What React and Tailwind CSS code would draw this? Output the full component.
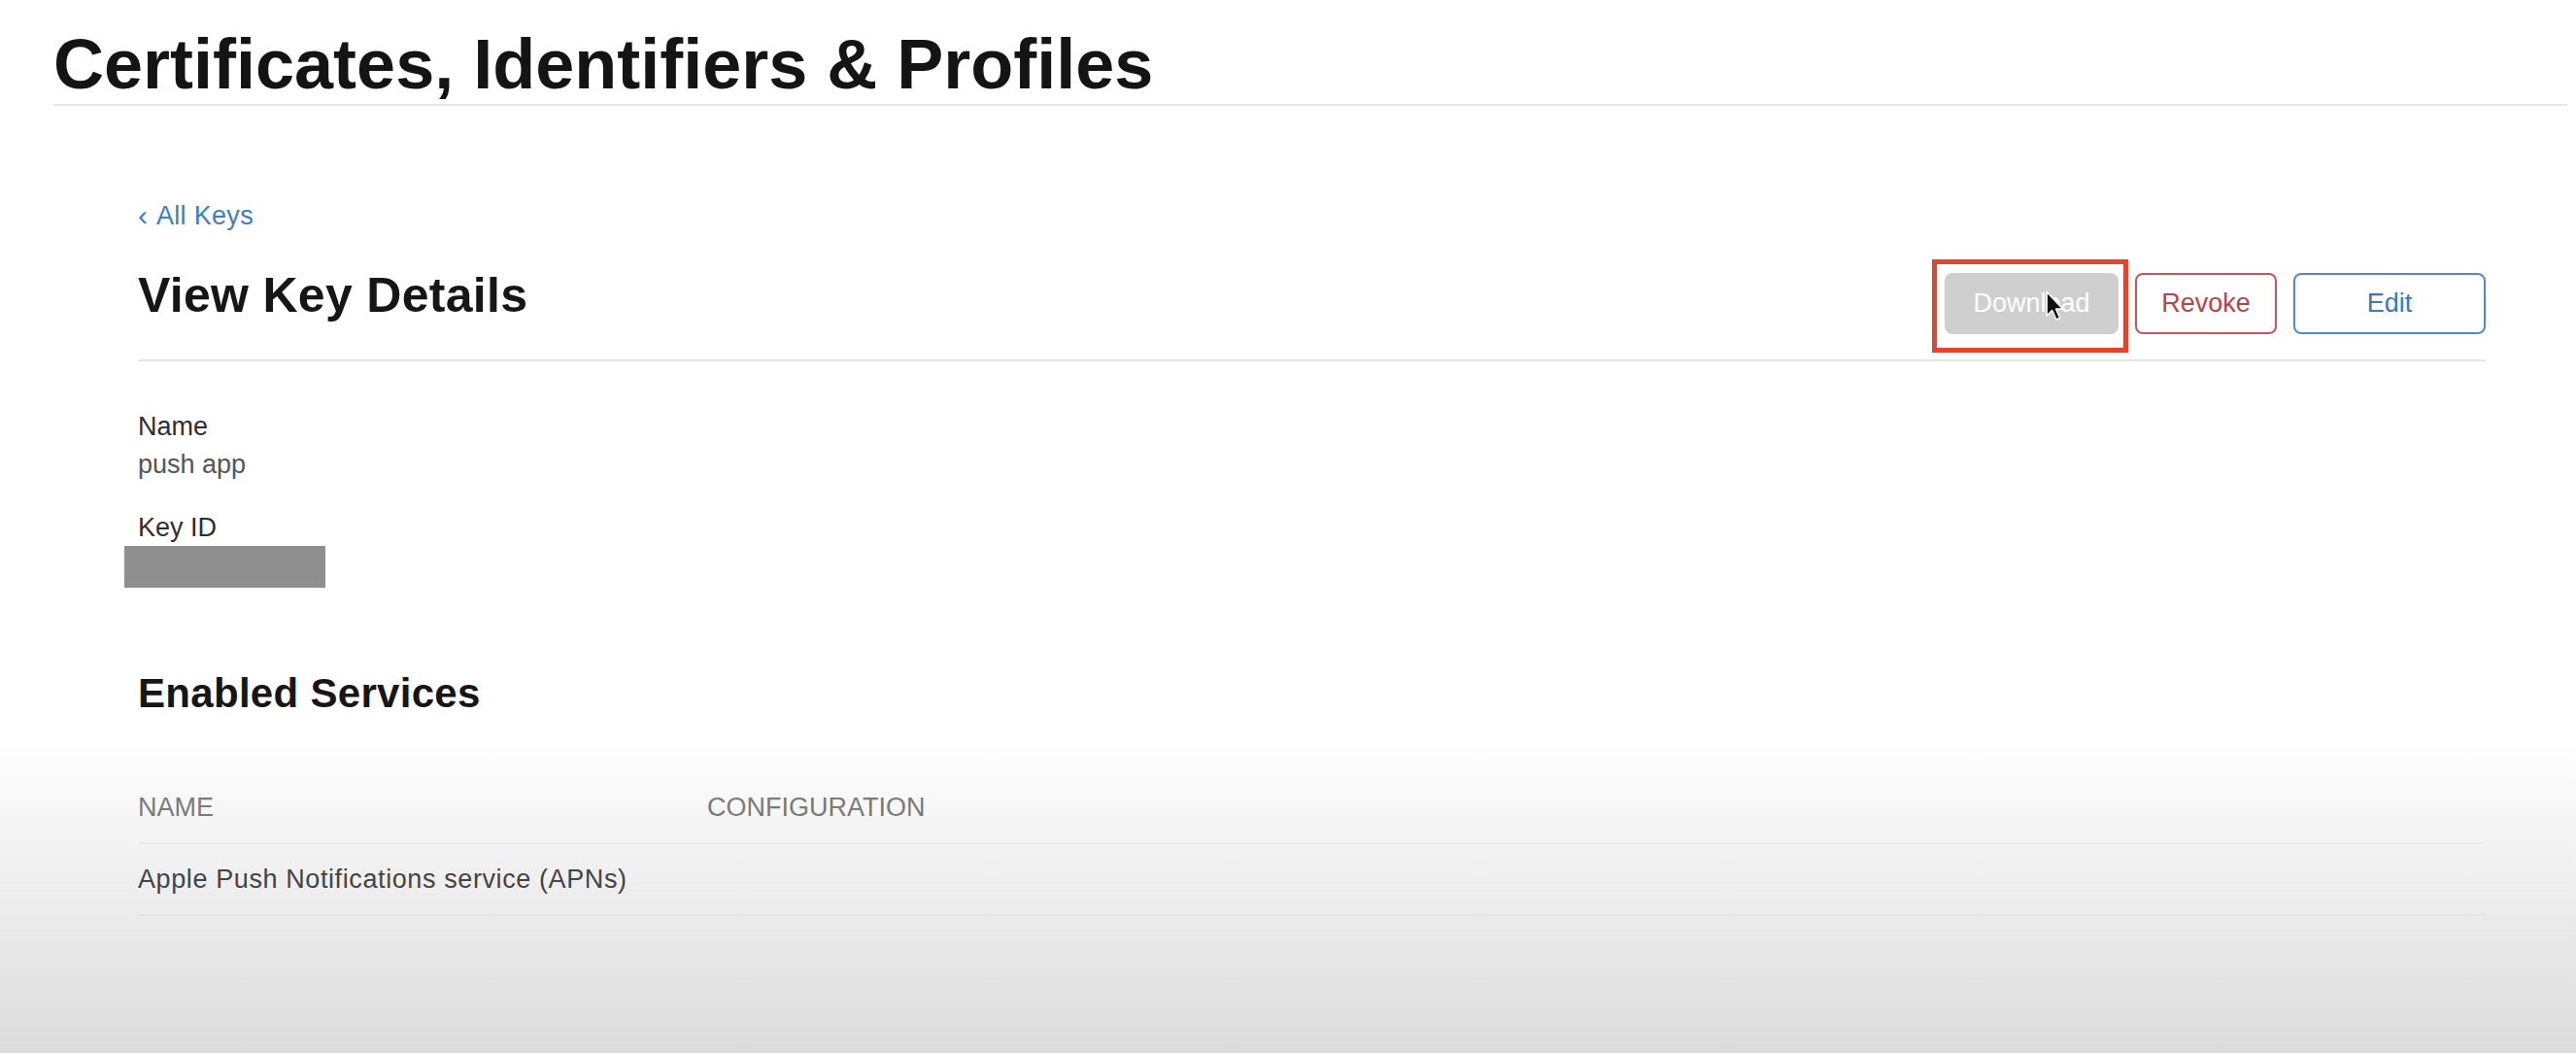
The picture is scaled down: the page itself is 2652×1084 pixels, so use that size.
import React from 'react';

const Cursor = () => (
  <svg width="19" height="32" viewBox="0 0 17 28" className="absolute left-[104px] top-[18px]">
    <path
      d="M1 1 L1 23 L6 18 L9.8 26.5 L13.2 25 L9.5 16.8 L16 16.8 Z"
      fill="#111"
      stroke="#fff"
      strokeWidth="1.4"
      strokeLinejoin="round"
    />
  </svg>
);

const App = () => {
  return (
    <div className="min-h-screen w-full overflow-hidden bg-linear-to-b from-white from-70% to-[#dcdcdc] font-['Liberation_Sans',Arial,sans-serif]">
      <header className="ml-[55px] mr-[9px] pt-[30px] pb-[5px] border-b-2 border-[#e7e7e7]">
        <h1 className="text-[72px] leading-none font-bold text-[#141414]">
          Certificates, Identifiers &amp; Profiles
        </h1>
      </header>

      <main className="pl-[142px] pr-[93px]">
        <a className="mt-[98px] flex items-center gap-[9px] text-[27px] leading-none text-[#3f7cc6]">
          <span className="text-[30px] leading-none">‹</span>
          <span className="tracking-[0.3px]">All Keys</span>
        </a>

        <div className="mt-[42px] flex items-start justify-between pb-[26px] border-b-2 border-[#e4e4e4]">
          <h2 className="text-[50px] leading-none font-bold tracking-[0.3px] text-[#161616]">View Key Details</h2>
          <div className="mt-[2px] flex gap-[17px]">
            <div className="relative">
              <button className="h-[63px] w-[179px] rounded-[8px] bg-[#cfcfcf] text-[27px] text-white">
                Download
              </button>
              <div className="absolute -left-[13px] -top-[14px] h-[96px] w-[202px] border-[5px] border-[#e8432a]" />
              <Cursor />
            </div>
            <button className="h-[63px] w-[146px] rounded-[8px] border-2 border-[#c7555a] bg-white text-[27px] text-[#b8414a]">
              Revoke
            </button>
            <button className="h-[63px] w-[198px] rounded-[8px] border-2 border-[#5389cc] bg-white text-[27px] text-[#3c76bf]">
              Edit
            </button>
          </div>
        </div>

        <div className="mt-[48px] text-[27px] leading-[39px]">
          <div className="text-[#2e2e2e]">Name</div>
          <div className="text-[#555]">push app</div>
          <div className="mt-[26px] text-[#2e2e2e]">Key ID</div>
          <div className="-mt-[1px] -ml-[14px] h-[43px] w-[207px] bg-[#8f8f8f]" />
        </div>

        <h3 className="mt-[88px] text-[42px] leading-none font-bold tracking-[0.3px] text-[#161616]">Enabled Services</h3>

        <div className="mt-[83px]">
          <div className="grid grid-cols-[586px_1fr] pb-[22px] border-b-2 border-[#ececec] text-[27px] leading-none text-[#7a7a7a]">
            <div>NAME</div>
            <div>CONFIGURATION</div>
          </div>
          <div className="grid grid-cols-[586px_1fr] pt-[23px] pb-[22px] border-b-2 border-[#e6e6e6] text-[27px] leading-none text-[#444]">
            <div className="tracking-[0.6px] whitespace-nowrap">Apple Push Notifications service (APNs)</div>
            <div></div>
          </div>
        </div>
      </main>
    </div>
  );
};

export default App;
